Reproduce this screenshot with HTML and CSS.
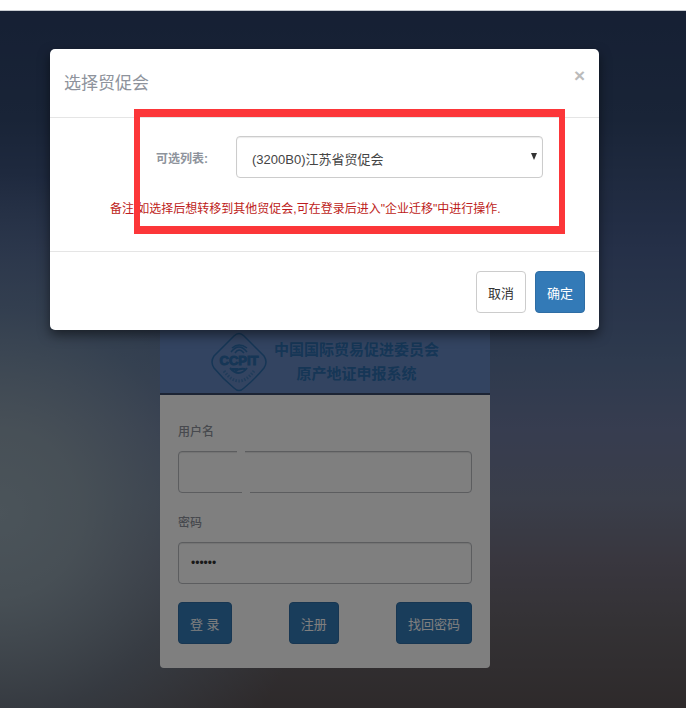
FILE: index.html
```html
<!DOCTYPE html>
<html lang="zh-CN">

<head>
    <meta charset="UTF-8">
    <meta name="viewport" content="width=device-width, initial-scale=1.0">
    <title>原产地证申报系统</title>
    <link rel="stylesheet" href="styles.css">
</head>

<body>

    <div class="topbar"></div>

    <div class="page">
        <div class="login">
            <div class="login-header">
                <svg class="logo" viewBox="0 0 56 60" width="56" height="60" aria-hidden="true">
                    <path d="M23 4 Q28 -1 33 4 Q43 14 53 24 Q57 30 53 36 Q44 47 33 56 Q28 61 23 56 Q12 47 3 36 Q-1 30 3 24 Q13 14 23 4 Z" fill="none" stroke="currentColor" stroke-width="1.5" />
                    <path d="M20 20 Q28 10 36 20 M24 21 Q28 15 33 21 M21 16 Q28 10 36 16" fill="none" stroke="currentColor" stroke-width="1.5" />
                    <path d="M19 36 Q28 46 36 36 M23 40 Q28 36 34 37 M21 37 H27" fill="none" stroke="currentColor" stroke-width="2" />
                    <path d="M13 39 Q28 59 43 39" fill="none" stroke="currentColor" stroke-width="3" stroke-dasharray="1.5 1.5" opacity="0.6" />
                    <text class="logo-text" x="28" y="33" text-anchor="middle">CCPIT</text>
                </svg>
                <div class="login-title">中国国际贸易促进委员会<br>原产地证申报系统</div>
            </div>

            <form class="login-form">
                <label for="username">用户名</label>
                <div class="input-wrap">
                    <input type="text" id="username" class="form-control">
                </div>
                <label for="password">密码</label>
                <input type="password" id="password" class="form-control" value="123456">
                <div class="login-buttons">
                    <button type="button" class="btn btn-primary">登 录</button>
                    <button type="button" class="btn btn-primary">注册</button>
                    <button type="button" class="btn btn-primary">找回密码</button>
                </div>
            </form>
        </div>

        <!-- 遮罩层和弹窗 -->
        <div class="backdrop">
            <div class="modal" role="dialog" aria-labelledby="modal-title">
                <div class="modal-header">
                    <h4 id="modal-title">选择贸促会</h4>
                    <button type="button" class="close" aria-label="关闭">×</button>
                </div>
                <div class="modal-body">
                    <div class="form-row">
                        <label for="org">可选列表:</label>
                        <div class="select-wrap">
                            <select id="org">
                                <option>(3200B0)江苏省贸促会</option>
                            </select>
                        </div>
                    </div>
                    <p class="note">备注:如选择后想转移到其他贸促会,可在登录后进入"企业迁移"中进行操作.</p>
                </div>
                <div class="modal-footer">
                    <button type="button" class="btn btn-default">取消</button>
                    <button type="button" class="btn btn-primary">确定</button>
                </div>
                <div class="highlight"></div>
            </div>
        </div>
    </div>

</body>

</html>
```
FILE: styles.css
```css
* {
    box-sizing: border-box;
}

body {
    margin: 0;
    min-height: 100vh;
    display: flex;
    flex-direction: column;
    font-family: "Liberation Sans", "Noto Sans CJK SC", sans-serif;
    font-size: 12px;
    color: #8e939c;
}

input,
select,
button {
    font-family: inherit;
}

.topbar {
    height: 11px;
    background: #ffffff;
    border-bottom: 1px solid #c8ccd2;
}

.page {
    position: relative;
    flex: 1;
    display: flex;
    flex-direction: column;
    align-items: center;
    justify-content: flex-end;
    padding: 300px 36px 40px 0;
    background:
        radial-gradient(ellipse 320px 340px at 0% 72%, #96a8b4 0%, rgba(146, 164, 176, 0.9) 25%, rgba(120, 144, 168, 0.5) 60%, rgba(100, 120, 160, 0) 100%),
        linear-gradient(#2c4068 0%, #32486e 15%, #4a6090 34%, #5c749c 50%, #6e7aa0 60%, #747c94 70%, #726e7e 79%, #68646a 88%, #5c5456 100%);
}

/* 登录框 */
.login {
    width: 330px;
    max-width: 100%;
    background: #ffffff;
    border-radius: 4px;
}

.login-header {
    display: flex;
    align-items: center;
    justify-content: center;
    gap: 7px;
    height: 68px;
    padding-top: 4px;
    background: #6689c2;
    border-bottom: 2px solid #384868;
    color: #2c6cac;
}

.logo-text {
    font-size: 13px;
    font-weight: bold;
    fill: currentColor;
    stroke: currentColor;
    stroke-width: 1;
}

.login-title {
    font-size: 15px;
    font-weight: bold;
    line-height: 24px;
    text-align: center;
}

.login-form {
    padding: 25px 18px 24px;
}

.login-form label {
    display: block;
    margin-bottom: 7px;
    line-height: 24px;
    font-weight: 500;
}

.form-control {
    display: block;
    width: 100%;
    height: 42px;
    padding: 6px 12px;
    border: 1px solid #b8babf;
    border-radius: 4px;
    background: #ffffff;
    box-shadow: inset 0 1px 1px rgba(0, 0, 0, 0.1);
    color: #333;
    font-size: 12px;
    margin-bottom: 18px;
}

.input-wrap {
    position: relative;
}

/* 边框上的两处断口 */
.input-wrap::before,
.input-wrap::after {
    content: "";
    position: absolute;
    width: 8px;
    height: 3px;
    background: #ffffff;
}

.input-wrap::before {
    left: 59px;
    top: 0;
}

.input-wrap::after {
    left: 64px;
    bottom: 0;
}

.login-buttons {
    display: flex;
    justify-content: space-between;
}

.btn {
    height: 42px;
    padding: 0 11px;
    border: 1px solid transparent;
    border-radius: 4px;
    font-size: 13px;
    cursor: pointer;
}

.btn-primary {
    background: #337ab7;
    border-color: #2e6da4;
    color: #ffffff;
}

.btn-default {
    background: #ffffff;
    border-color: #cccccc;
    color: #333333;
}

/* 弹窗 */
.backdrop {
    position: absolute;
    top: 0;
    right: 0;
    bottom: 0;
    left: 0;
    padding: 38px 37px 0 0;
    background: rgba(0, 0, 0, 0.5);
}

.modal {
    position: relative;
    width: 549px;
    max-width: 100%;
    margin: 0 auto;
    background: #ffffff;
    border-radius: 5px;
    box-shadow: 0 5px 12px rgba(0, 0, 0, 0.5);
}

.modal-header {
    display: flex;
    justify-content: space-between;
    align-items: flex-start;
    height: 69px;
    padding: 14px;
    border-bottom: 1px solid #e5e5e5;
}

.modal-header h4 {
    margin: 0;
    font-size: 17px;
    font-weight: normal;
    line-height: 42px;
}

.close {
    padding: 0;
    border: none;
    background: none;
    color: #bbbbbb;
    font-size: 19px;
    font-weight: bold;
    line-height: 26px;
    cursor: pointer;
}

.modal-body {
    padding: 18px 56px 31px 0;
}

.form-row {
    display: flex;
    align-items: center;
    gap: 28px;
}

.form-row label {
    width: 158px;
    text-align: right;
    font-weight: bold;
}

.select-wrap {
    position: relative;
    flex: 1;
}

.select-wrap::after {
    content: "";
    position: absolute;
    right: 6px;
    top: 17px;
    border: 3px solid transparent;
    border-top: 7px solid #333333;
    border-bottom: none;
    pointer-events: none;
}

.select-wrap select {
    display: block;
    width: 100%;
    height: 42px;
    padding: 6px 15px 2px;
    appearance: none;
    border: 1px solid #cccccc;
    border-radius: 4px;
    background: #ffffff;
    box-shadow: inset 0 1px 1px rgba(0, 0, 0, 0.08);
    color: #444444;
    font-size: 13px;
}

.note {
    margin: 20px 0 0 60px;
    color: #bd1c20;
    line-height: 22px;
    white-space: nowrap;
}

.modal-footer {
    display: flex;
    justify-content: flex-end;
    gap: 9px;
    padding: 19px 14px 17px;
    border-top: 1px solid #e5e5e5;
}

/* 红色标注框 */
.highlight {
    position: absolute;
    top: 60px;
    right: 34px;
    left: 84px;
    height: 125px;
    border: 6px solid #fc3639;
    border-width: 8px 6px;
    pointer-events: none;
}
```
